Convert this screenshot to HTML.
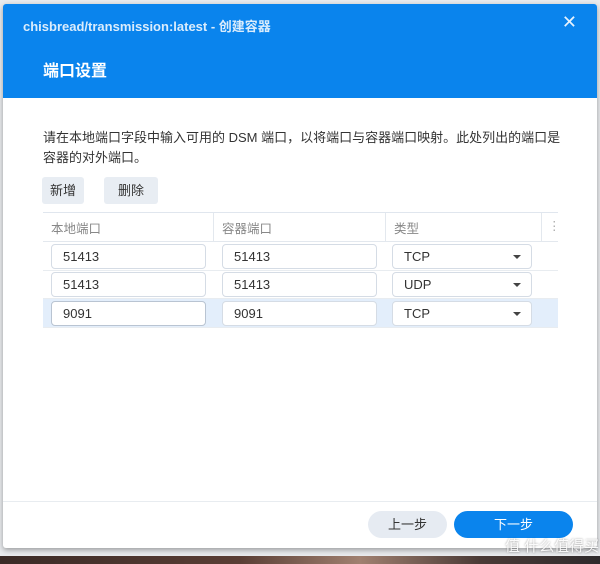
<!DOCTYPE html>
<html><head><meta charset="utf-8"><style>
*{box-sizing:border-box;margin:0;padding:0}
body{width:600px;height:564px;background:#e9ebee;position:relative;overflow:hidden;font-family:"Liberation Sans","Noto Sans CJK SC",sans-serif}
.photo{position:absolute;left:0;top:556px;width:600px;height:8px;background:linear-gradient(90deg,#3a2a26,#5a3e35 40%,#a08070 60%,#4a3a36 80%,#2e2a2c)}
.dlg{position:absolute;left:3px;top:4px;width:594px;height:544px;background:#fff;box-shadow:0 2px 6px rgba(0,0,0,.35);border-radius:3px;overflow:hidden}
.hd{height:94px;background:#0a84ed;color:#fff;position:relative}
.t1{position:absolute;left:20px;top:12px;font-size:13px;font-weight:bold;opacity:.85}
.x{position:absolute;right:20px;top:8px;font-size:18px;opacity:.9}
.t2{position:absolute;left:40px;top:53px;font-size:16px;font-weight:bold}
.desc{position:absolute;left:40px;top:124px;width:518px;font-size:13px;line-height:19.5px;color:#333}
.b{position:absolute;top:173px;height:27px;background:#e8edf3;border-radius:3px;font-size:13px;color:#333;text-align:center;line-height:27px}
.tbl{position:absolute;left:40px;top:208px;width:515px;border-top:1px solid #e0e6ee}
.th{height:29px;position:relative;border-bottom:1px solid #e3e8ee;font-size:12.5px;color:#888}
.th span{position:absolute;top:5px}
.vl{position:absolute;top:0;height:29px;border-left:1px solid #e3e8ee}
.row{height:28.5px;position:relative;border-bottom:1px solid #e8ecf0}
.row.sel{background:#e3eefb}
.in{position:absolute;top:1.5px;height:25px;border:1px solid #d5dce5;border-radius:4px;background:#fff;font-size:13px;color:#333;padding-left:11px;line-height:23px}
.arr{position:absolute;right:10px;top:10px;border-left:4px solid transparent;border-right:4px solid transparent;border-top:4px solid #444}
.sep{position:absolute;left:0;top:497px;width:594px;border-top:1px solid #e8ecf0}
.fb{position:absolute;top:507px;height:27px;border-radius:14px;font-size:13px;text-align:center;line-height:27px}
.wm{position:absolute;left:505px;top:535px;font-size:15px;color:rgba(255,255,255,.9);text-shadow:0 0 2px rgba(0,0,0,.4)}
</style></head><body>
<div class="photo"></div>
<div class="dlg">
<div class="hd"><div class="t1">chisbread/transmission:latest - 创建容器</div><div class="x">✕</div><div class="t2">端口设置</div></div>
<div class="desc">请在本地端口字段中输入可用的 DSM 端口，以将端口与容器端口映射。此处列出的端口是<br>容器的对外端口。</div>
<div class="b" style="left:39px;width:42px">新增</div>
<div class="b" style="left:101px;width:54px">删除</div>
<div class="tbl">
<div class="th"><span style="left:8px">本地端口</span><div class="vl" style="left:170px"></div><span style="left:179px">容器端口</span><div class="vl" style="left:342px"></div><span style="left:351px">类型</span><div class="vl" style="left:498px"></div><span style="left:505px;color:#aaa">⋮</span></div>
<div class="row"><div class="in" style="left:8px;width:155px">51413</div><div class="in" style="left:179px;width:155px">51413</div><div class="in" style="left:349px;width:140px">TCP<div class="arr"></div></div></div>
<div class="row"><div class="in" style="left:8px;width:155px">51413</div><div class="in" style="left:179px;width:155px">51413</div><div class="in" style="left:349px;width:140px">UDP<div class="arr"></div></div></div>
<div class="row sel"><div class="in" style="left:8px;width:155px;border-color:#b9c4d2">9091</div><div class="in" style="left:179px;width:155px">9091</div><div class="in" style="left:349px;width:140px">TCP<div class="arr"></div></div></div>
</div>
<div class="sep"></div>
<div class="fb" style="left:365px;width:79px;background:#e6ebf2;color:#333">上一步</div>
<div class="fb" style="left:451px;width:119px;background:#0a84ed;color:#fff">下一步</div>
</div>
<div class="wm">值 什么值得买</div>
</body></html>
